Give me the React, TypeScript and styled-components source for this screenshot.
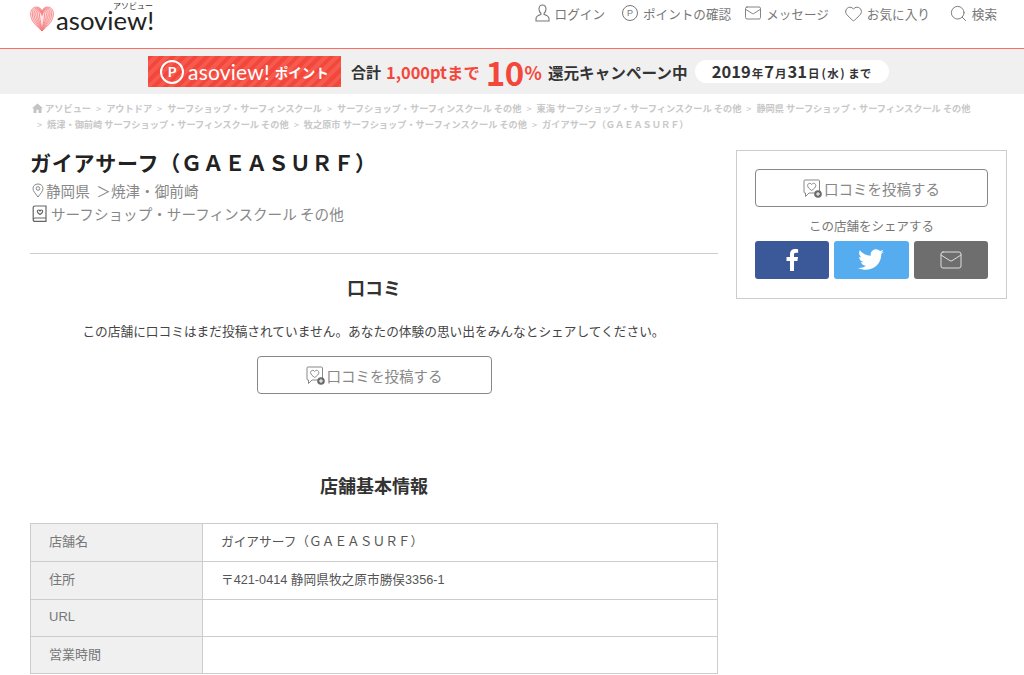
import styled, { createGlobalStyle } from 'styled-components';
import { Search, Mail, Heart } from 'lucide-react';

const GlobalStyle = createGlobalStyle`
  html, body {
    margin: 0;
    padding: 0;
    background: #fff;
    overflow: hidden;
    font-family: "Liberation Sans", "Noto Sans CJK JP", sans-serif;
  }
  * { box-sizing: border-box; }
`;

const Page = styled.div`
  width: 1024px;
  height: 675px;
  overflow: hidden;
`;

const Header = styled.header`
  height: 49px;
  border-bottom: 1px solid #ff6a61;
  display: flex;
  justify-content: space-between;
  padding: 0 27px 0 30px;
`;

const Logo = styled.div`
  display: flex;
  align-items: flex-start;
  padding-top: 6px;
  gap: 2px;
`;

const LogoStack = styled.div`
  display: flex;
  flex-direction: column;
  align-items: flex-end;
  margin-top: -4px;
`;

const LogoKana = styled.span`
  font-family: "Noto Sans CJK JP", sans-serif;
  font-size: 8px;
  line-height: 8px;
  color: #333;
  margin-right: 1px;
`;

const LogoWord = styled.div`
  font-family: Lato, sans-serif;
  font-size: 25.7px;
  line-height: 20px;
  color: #222;
`;

const Nav = styled.nav`
  display: flex;
  align-items: flex-start;
  padding-top: 3px;
`;

const NavItem = styled.a<{ $ml: number; $gap?: number }>`
  display: flex;
  align-items: center;
  gap: ${(p) => p.$gap ?? 4}px;
  height: 20px;
  margin-left: ${(p) => p.$ml}px;
  font-size: 12.6px;
  color: #777;
  white-space: nowrap;
`;

const PointBadge = styled.span`
  width: 16px;
  height: 16px;
  border: 1px solid #777;
  border-radius: 50%;
  font-size: 9px;
  line-height: 14px;
  text-align: center;
  color: #777;
`;

const Campaign = styled.div`
  height: 45px;
  background: #f0f0f0;
  display: flex;
  align-items: center;
  padding-left: 148px;
  font-family: "Noto Sans CJK JP", sans-serif;
  font-weight: 700;
  color: #333;
  white-space: nowrap;
`;

const PointTag = styled.div`
  width: 193px;
  height: 31px;
  display: flex;
  align-items: center;
  padding-left: 12px;
  gap: 4px;
  color: #fff;
  background: repeating-linear-gradient(135deg, #f4473b 0 4px, #f65a4e 4px 8px);
`;

const PointMark = styled.span`
  width: 24px;
  height: 24px;
  border: 2px solid #fff;
  border-radius: 50%;
  font-family: Lato, sans-serif;
  font-size: 14px;
  line-height: 20px;
  text-align: center;
`;

const PointName = styled.span`
  font-family: Lato, sans-serif;
  font-weight: 400;
  font-size: 21px;
  letter-spacing: 0.2px;
`;

const PointKana = styled.span`
  font-size: 13.5px;
  font-weight: 700;
  margin-left: 1px;
`;

const CampaignText = styled.span<{ $size: number; $red?: boolean; $ml?: number; $ls?: number }>`
  font-size: ${(p) => p.$size}px;
  color: ${(p) => (p.$red ? '#f4473b' : '#333')};
  margin-left: ${(p) => p.$ml ?? 0}px;
  letter-spacing: ${(p) => p.$ls ?? 0}px;
`;

const Deadline = styled.div`
  width: 194px;
  height: 23px;
  margin-left: 8px;
  background: #fff;
  border-radius: 12px;
  display: flex;
  align-items: baseline;
  justify-content: center;
  gap: 1px;
  font-size: 11.5px;
  line-height: 23px;
  padding-right: 2px;
`;

const DeadlineNum = styled.span`
  font-size: 16.5px;
`;

const Weekday = styled.span`
  letter-spacing: 1.5px;
  margin: 0 1px;
`;

const Breadcrumb = styled.div`
  padding: 6px 30px 0;
  font-size: 9.2px;
  line-height: 16px;
  font-weight: 700;
  color: #c8c8c8;
  font-family: "Noto Sans CJK JP", sans-serif;
`;

const CrumbRow = styled.div`
  display: flex;
  align-items: center;
  padding-left: 2px;
  white-space: nowrap;
`;

const Sep = styled.span`
  margin: 0 5px;
  font-weight: 400;
`;

const Columns = styled.div`
  display: flex;
  padding: 17px 17px 0 30px;
  gap: 18px;
`;

const Main = styled.main`
  width: 688px;
`;

const Title = styled.h1`
  margin: 0;
  font-family: "Noto Sans CJK JP", sans-serif;
  font-size: 21px;
  letter-spacing: 0.75px;
  line-height: 26px;
  font-weight: 700;
  color: #222;
`;

const MetaRow = styled.div<{ $size: number; $top: number; $gap: number }>`
  display: flex;
  align-items: center;
  gap: ${(p) => p.$gap}px;
  margin-top: ${(p) => p.$top}px;
  height: 22px;
  padding-left: 2px;
  font-family: "Noto Sans CJK JP", sans-serif;
  font-size: ${(p) => p.$size}px;
  color: #888;
`;

const Divider = styled.hr`
  border: 0;
  border-top: 1px solid #ccc;
  margin: 29px 0 0;
`;

const SectionTitle = styled.h2<{ $top: number }>`
  margin: ${(p) => p.$top}px 0 0;
  text-align: center;
  font-family: "Noto Sans CJK JP", sans-serif;
  font-size: 18px;
  line-height: 24px;
  font-weight: 700;
  color: #333;
`;

const EmptyText = styled.p`
  margin: 22px 0 0;
  text-align: center;
  font-family: "Noto Sans CJK JP", sans-serif;
  font-size: 12.7px;
  line-height: 20px;
  color: #444;
  padding-right: 1px;
`;

const PostButton = styled.a<{ $width: number; $height: number }>`
  width: ${(p) => p.$width}px;
  height: ${(p) => p.$height}px;
  border: 1px solid #888;
  border-radius: 4px;
  display: flex;
  align-items: center;
  justify-content: center;
  gap: 2px;
  font-family: "Noto Sans CJK JP", sans-serif;
  font-size: 14.5px;
  color: #888;
  background: #fff;
`;

const CenterRow = styled.div`
  display: flex;
  justify-content: center;
  margin-top: 15px;
`;

const InfoTable = styled.table`
  width: 688px;
  margin-top: 26px;
  border-collapse: collapse;
  table-layout: fixed;
  font-size: 12.7px;
  color: #555;
  border: 1px solid #ccc;
`;

const Th = styled.th<{ $h: number }>`
  width: 172px;
  height: ${(p) => p.$h}px;
  padding: 0 0 4px 18px;
  background: #f0f0f0;
  border: 1px solid #ccc;
  text-align: left;
  font-size: 13px;
  font-weight: 400;
  color: #777;
`;

const Td = styled.td`
  padding: 0 0 4px 18px;
  border: 1px solid #ccc;
`;

const Aside = styled.aside`
  width: 271px;
  height: 149px;
  margin-top: 1px;
  border: 1px solid #ccc;
  padding: 18px 18px 0;
`;

const ShareLabel = styled.div`
  margin-top: 10px;
  text-align: center;
  font-family: "Noto Sans CJK JP", sans-serif;
  font-size: 12.5px;
  line-height: 18px;
  color: #777;
`;

const ShareRow = styled.div`
  display: flex;
  gap: 5px;
  margin-top: 6px;
`;

const ShareButton = styled.a<{ $bg: string }>`
  flex: 1;
  height: 38px;
  border-radius: 3px;
  background: ${(p) => p.$bg};
  display: flex;
  align-items: center;
  justify-content: center;
  color: #fff;
`;

const heartLoops = [
  'M12 25C6 19.5 .6 15 .6 8 .6 3.5 3.3 1 6.5 1 9 1 11 2.5 12 5c1-2.5 3-4 5.5-4 3.2 0 5.900 2.5 5.900 7 0 7-5.400 11.5-11.400 17z',
  'M12 25C7.5 19 2.3 14 2.3 8 2.3 4.3 4.3 2 7 2c2.2 0 4 1.5 5 4 1-2.5 2.8-4 5-4 2.7 0 4.7 2.3 4.7 6 0 6-5.2 11-9.7 17z',
  'M12 25C8.5 18.5 4 13.5 4 8 4 5 5.3 3 7.5 3 9.5 3 11 4.5 12 7c1-2.5 2.5-4 4.5-4C18.7 3 20 5 20 8c0 5.5-4.5 10.5-8 17z',
  'M12 25C9.5 18 5.8 13 5.8 8.2 5.8 5.7 6.7 4 8.2 4 10 4 11.2 5.5 12 8c.8-2.5 2-4 3.8-4 1.5 0 2.4 1.7 2.4 4.2C18.2 13 14.5 18 12 25z',
  'M12 25C10.5 18 7.6 13 7.6 8.5 7.6 6.5 8.1 5 9 5c1.4 0 2.3 1.5 3 4 .7-2.5 1.6-4 3-4 .9 0 1.4 1.5 1.4 3.5C16.4 13 13.5 18 12 25z',
  'M12 25C11.3 18 9.5 13 9.5 9c0-1.5.3-2.8.9-2.8.7 0 1.2 1.3 1.6 3.3.4-2 .9-3.3 1.6-3.3.6 0 .9 1.3.9 2.8 0 4-1.8 9-2.5 16z',
];

const HeartLogo = () => (
  <svg width="24" height="26" viewBox="0 0 24 26" fill="#ffe3e3" stroke="#f4686c" strokeWidth="0.7">
    {heartLoops.map((d) => (
      <path key={d} d={d} />
    ))}
  </svg>
);

const UserIcon = () => (
  <svg width="15" height="18" viewBox="0 0 15 18" fill="none" stroke="#777" strokeWidth="1.1">
    <path d="M7.5 1C5.3 1 4 2.7 4 5c0 1.8.8 3.3 1.9 4.2v1.3C3.2 11.3 1 12.5 1 14.5V17h13v-2.5c0-2-2.2-3.2-4.9-4V9.2C10.2 8.3 11 6.8 11 5c0-2.3-1.3-4-3.5-4z" />
  </svg>
);

const ReviewIcon = () => (
  <svg width="19" height="19" viewBox="0 0 19 19" fill="none" stroke="#888" strokeWidth="1">
    <path d="M2 1h13.5a1 1 0 0 1 1 1v12H6l-3.5 3.5V14H2a1 1 0 0 1-1-1V2a1 1 0 0 1 1-1z" />
    <path d="M8.700 11.5C6.2 9.7 4.6 8.3 4.6 6.5 4.6 5.2 5.6 4.3 6.7 4.3c.8 0 1.6.4 2 1.2.4-.8 1.2-1.2 2-1.2 1.1 0 2.1.9 2.1 2.2 0 1.8-1.6 3.2-4.1 5z" />
    <circle cx="15" cy="15" r="3.800" fill="#6a6a6a" stroke="none" />
    <path d="M15 13v4M13 15h4" stroke="#fff" />
  </svg>
);

const PinIcon = () => (
  <svg width="12" height="15" viewBox="0 0 12 15" fill="none" stroke="#888" strokeWidth="1">
    <path d="M6 14C3.5 10.5 1 8.2 1 5.5 1 2.8 3.2 1 6 1s5 1.8 5 4.5C11 8.2 8.5 10.5 6 14z" />
    <circle cx="6" cy="5.5" r="1.800" />
  </svg>
);

const BookIcon = () => (
  <svg width="15" height="17" viewBox="0 0 15 17" fill="none" stroke="#666" strokeWidth="1.2">
    <path d="M3 1h11v12H3.2C2 13 1.2 13.7 1.2 14.7S2 16.4 3.2 16.4H14V13M1.2 14.7V2.5C1.2 1.6 2 1 3 1" />
    <path d="M8 9.5C6.3 8.3 5.3 7.5 5.3 6.4c0-.9.6-1.4 1.3-1.4.6 0 1.1.3 1.4.9.3-.6.8-.9 1.4-.9.7 0 1.3.5 1.3 1.4 0 1.1-1 1.9-2.700 3.100z" />
  </svg>
);

const HomeIcon = () => (
  <svg width="11" height="10" viewBox="0 0 11 10" fill="#c4c4c4">
    <path d="M5.5 .5 0 5.2h1.5V10h3V6.8h2V10h3V5.2H11z" />
  </svg>
);

const FacebookIcon = () => (
  <svg width="14" height="22" viewBox="0 0 14 22" fill="#fff">
    <path d="M9 22V12h3.4l.6-4H9V5.7C9 4.5 9.4 3.8 11 3.8h2.1V.3C12.7.2 11.5 0 10.1 0 7.1 0 5 1.8 5 5.2V8H1.5v4H5v10z" />
  </svg>
);

const TwitterIcon = () => (
  <svg width="26" height="22" viewBox="0 0 24 20" fill="#fff">
    <path d="M24 2.4c-.9.4-1.8.7-2.8.8 1-.6 1.8-1.6 2.2-2.7-1 .6-2 1-3.1 1.2C19.3.7 18 0 16.6 0c-2.7 0-4.9 2.2-4.9 4.9 0 .4 0 .8.1 1.1C7.7 5.8 4.1 3.9 1.7.9c-.4.7-.7 1.6-.7 2.5 0 1.7.9 3.2 2.2 4.1-.8 0-1.6-.2-2.2-.6v.1c0 2.4 1.7 4.4 3.9 4.8-.4.1-.8.2-1.3.2-.3 0-.6 0-.9-.1.6 2 2.4 3.4 4.6 3.4-1.7 1.3-3.8 2.1-6.1 2.1-.4 0-.8 0-1.2-.1C2.2 18.3 4.8 19 7.5 19c9.1 0 14-7.5 14-14v-.6c1-.7 1.8-1.5 2.5-2z" />
  </svg>
);

const crumbsOne = [
  'アソビュー',
  'アウトドア',
  'サーフショップ・サーフィンスクール',
  'サーフショップ・サーフィンスクール その他',
  '東海 サーフショップ・サーフィンスクール その他',
  '静岡県 サーフショップ・サーフィンスクール その他',
];

const crumbsTwo = [
  '焼津・御前崎 サーフショップ・サーフィンスクール その他',
  '牧之原市 サーフショップ・サーフィンスクール その他',
  'ガイアサーフ（ＧＡＥＡＳＵＲＦ）',
];

const App = () => {
  return (
    <Page>
      <GlobalStyle />
      <Header>
        <Logo>
          <HeartLogo />
          <LogoStack>
            <LogoKana>アソビュー</LogoKana>
            <LogoWord>asoview!</LogoWord>
          </LogoStack>
        </Logo>
        <Nav>
          <NavItem $ml={0} $gap={5}>
            <UserIcon />
            ログイン
          </NavItem>
          <NavItem $ml={17} $gap={5}>
            <PointBadge>P</PointBadge>
            ポイントの確認
          </NavItem>
          <NavItem $ml={13}>
            <Mail size={18} strokeWidth={1.2} />
            メッセージ
          </NavItem>
          <NavItem $ml={15}>
            <Heart size={19} strokeWidth={1.2} />
            お気に入り
          </NavItem>
          <NavItem $ml={19}>
            <Search size={19} strokeWidth={1.2} />
            検索
          </NavItem>
        </Nav>
      </Header>

      <Campaign>
        <PointTag>
          <PointMark>P</PointMark>
          <PointName>asoview!</PointName>
          <PointKana>ポイント</PointKana>
        </PointTag>
        <CampaignText $size={15} $ml={10}>合計</CampaignText>
        <CampaignText $size={16.4} $red $ml={5}>1,000ptまで</CampaignText>
        <CampaignText $size={33} $red $ml={6} $ls={-0.6}>10</CampaignText>
        <CampaignText $size={18} $red $ml={1}>%</CampaignText>
        <CampaignText $size={15.6} $ml={6}>還元キャンペーン中</CampaignText>
        <Deadline>
          <DeadlineNum>2019</DeadlineNum>
          <span>年</span>
          <DeadlineNum>7</DeadlineNum>
          <span>月</span>
          <DeadlineNum>31</DeadlineNum>
          <span>日</span>
          <Weekday>(水)</Weekday>
          <span>まで</span>
        </Deadline>
      </Campaign>

      <Breadcrumb>
        <CrumbRow>
          <HomeIcon />
          &nbsp;
          {crumbsOne.map((c, i) => (
            <span key={c}>
              {c}
              {i < crumbsOne.length - 1 && <Sep>&gt;</Sep>}
            </span>
          ))}
        </CrumbRow>
        <CrumbRow>
          {crumbsTwo.map((c) => (
            <span key={c}>
              <Sep>&gt;</Sep>
              {c}
            </span>
          ))}
        </CrumbRow>
      </Breadcrumb>

      <Columns>
        <Main>
          <Title>ガイアサーフ（ＧＡＥＡＳＵＲＦ）</Title>
          <MetaRow $size={14.6} $top={4} $gap={2}>
            <PinIcon />
            静岡県&nbsp;&nbsp;＞焼津・御前崎
          </MetaRow>
          <MetaRow $size={14.6} $top={1} $gap={4}>
            <BookIcon />
            サーフショップ・サーフィンスクール その他
          </MetaRow>
          <Divider />
          <SectionTitle $top={21}>口コミ</SectionTitle>
          <EmptyText>
            この店舗に口コミはまだ投稿されていません。あなたの体験の思い出をみんなとシェアしてください。
          </EmptyText>
          <CenterRow>
            <PostButton $width={235} $height={38}>
              <ReviewIcon />
              口コミを投稿する
            </PostButton>
          </CenterRow>
          <SectionTitle $top={79}>店舗基本情報</SectionTitle>
          <InfoTable>
            <tbody>
              <tr>
                <Th $h={38}>店舗名</Th>
                <Td>ガイアサーフ（ＧＡＥＡＳＵＲＦ）</Td>
              </tr>
              <tr>
                <Th $h={38}>住所</Th>
                <Td>〒421-0414 静岡県牧之原市勝俣3356-1</Td>
              </tr>
              <tr>
                <Th $h={37}>URL</Th>
                <Td />
              </tr>
              <tr>
                <Th $h={37}>営業時間</Th>
                <Td />
              </tr>
            </tbody>
          </InfoTable>
        </Main>

        <Aside>
          <PostButton $width={233} $height={38}>
            <ReviewIcon />
            口コミを投稿する
          </PostButton>
          <ShareLabel>この店舗をシェアする</ShareLabel>
          <ShareRow>
            <ShareButton $bg="#3b5998"><FacebookIcon /></ShareButton>
            <ShareButton $bg="#55acee"><TwitterIcon /></ShareButton>
            <ShareButton $bg="#6e6e6e">
              <Mail size={24} strokeWidth={1} color="#ddd" />
            </ShareButton>
          </ShareRow>
        </Aside>
      </Columns>
    </Page>
  );
};

export default App;
